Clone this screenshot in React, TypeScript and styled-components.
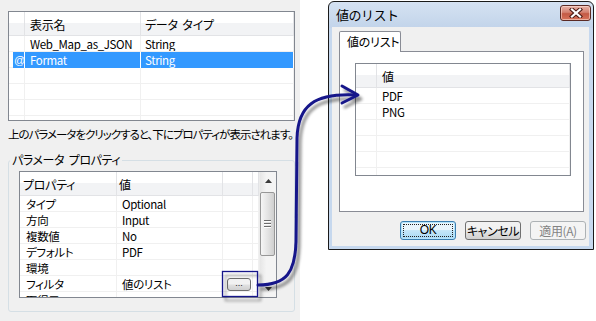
import styled, { createGlobalStyle } from "styled-components";

const GlobalStyle = createGlobalStyle`
  html, body {
    margin: 0;
    padding: 0;
    background: #ffffff;
  }
  body {
    font-family: "Noto Sans CJK JP", "Liberation Sans", sans-serif;
    font-size: 12px;
    font-feature-settings: "palt";
    color: #000;
  }
  * {
    box-sizing: border-box;
  }
`;

const topCols = "16px 116px 1fr";
const propCols = "97px 106px 30px 1fr";
const listCols = "21px 1fr";

const paramRows = [
  { name: "Web_Map_as_JSON", type: "String", mark: "", selected: false },
  { name: "Format", type: "String", mark: "@", selected: true },
  { name: "", type: "", mark: "", selected: false },
  { name: "", type: "", mark: "", selected: false },
  { name: "", type: "", mark: "", selected: false },
  { name: "", type: "", mark: "", selected: false },
];

const propRows = [
  { key: "タイプ", value: "Optional" },
  { key: "方向", value: "Input" },
  { key: "複数値", value: "No" },
  { key: "デフォルト", value: "PDF" },
  { key: "環境", value: "" },
  { key: "フィルタ", value: "値のリスト", button: true },
  { key: "取得元", value: "" },
];

const listValues = ["PDF", "PNG", "", "", "", ""];

export default function App() {
  return (
    <>
      <GlobalStyle />
      <Screen>
        <LeftPanel>
          <ListView $w={287} $h={110}>
            <HeaderRow $cols={topCols}>
              <HeaderCell $pad={0} />
              <HeaderCell $pad={5}>表示名</HeaderCell>
              <HeaderCell $pad={4}>データ&nbsp;&nbsp;タイプ</HeaderCell>
            </HeaderRow>
            {paramRows.map((r, i) => (
              <Row key={i} $cols={topCols}>
                <MarkCell $selected={r.selected}>{r.mark}</MarkCell>
                <Cell $pad={5} $selected={r.selected}>
                  {r.name}
                </Cell>
                <Cell $pad={4} $selected={r.selected}>
                  {r.type}
                </Cell>
              </Row>
            ))}
          </ListView>

          <Hint>上のパラメータをクリックすると、下にプロパティが表示されます。</Hint>

          <GroupBox>
            <GroupLabel>パラメータ&nbsp;&nbsp;プロパティ</GroupLabel>
            <PropertyGrid>
              <PropTable>
                <HeaderRow $cols={propCols}>
                  <HeaderCell $pad={3}>プロパティ</HeaderCell>
                  <HeaderCell $pad={2}>値</HeaderCell>
                  <HeaderCell $pad={0} />
                  <HeaderCell $pad={0} />
                </HeaderRow>
                {propRows.map((r, i) => (
                  <Row key={i} $cols={propCols}>
                    <Cell $pad={6}>{r.key}</Cell>
                    <Cell $pad={5}>{r.value}</Cell>
                    <Cell $pad={4}>
                      {r.button && <EllipsisButton>...</EllipsisButton>}
                    </Cell>
                    <Cell $pad={0} />
                  </Row>
                ))}
              </PropTable>
              <ScrollBar>
                <ScrollArrow>
                  <svg width="7" height="4" viewBox="0 0 7 4">
                    <path d="M0 4 L3.5 0 L7 4 Z" fill="#3b3b3b" />
                  </svg>
                </ScrollArrow>
                <ScrollTrack>
                  <Thumb>
                    <Grip />
                    <Grip />
                    <Grip />
                  </Thumb>
                </ScrollTrack>
                <ScrollArrow>
                  <svg width="7" height="4" viewBox="0 0 7 4">
                    <path d="M0 0 L3.5 4 L7 0 Z" fill="#3b3b3b" />
                  </svg>
                </ScrollArrow>
              </ScrollBar>
            </PropertyGrid>
          </GroupBox>
        </LeftPanel>

        <Dialog>
          <TitleBar>
            <Title>値のリスト</Title>
            <CloseButton>
              <svg width="14" height="10" viewBox="0 0 14 10">
                <path
                  d="M3 1.5 L11 8.5 M11 1.5 L3 8.5"
                  stroke="#4a1a14"
                  strokeWidth="4.2"
                  strokeLinecap="square"
                />
                <path
                  d="M3 1.5 L11 8.5 M11 1.5 L3 8.5"
                  stroke="#ffffff"
                  strokeWidth="2.2"
                  strokeLinecap="square"
                />
              </svg>
            </CloseButton>
          </TitleBar>
          <Client>
            <TabStrip>
              <Tab>値のリスト</Tab>
            </TabStrip>
            <TabPanel>
              <ListView $w={216} $h={113}>
                <HeaderRow $cols={listCols}>
                  <HeaderCell $pad={0} />
                  <HeaderCell $pad={5}>値</HeaderCell>
                </HeaderRow>
                {listValues.map((v, i) => (
                  <Row key={i} $cols={listCols}>
                    <Cell $pad={0} />
                    <Cell $pad={5}>{v}</Cell>
                  </Row>
                ))}
              </ListView>
            </TabPanel>
            <ButtonRow>
              <DefaultButton>
                <FocusRect>OK</FocusRect>
              </DefaultButton>
              <Button>キャンセル</Button>
              <Button disabled>適用(A)</Button>
            </ButtonRow>
          </Client>
        </Dialog>

        <Callout width="596" height="321" viewBox="0 0 596 321">
          <defs>
            <filter id="shade" x="-20%" y="-20%" width="140%" height="140%">
              <feGaussianBlur in="SourceAlpha" stdDeviation="1.6" />
              <feOffset dx="3" dy="4" result="blur" />
              <feComponentTransfer>
                <feFuncA type="linear" slope="0.45" />
              </feComponentTransfer>
              <feMerge>
                <feMergeNode />
                <feMergeNode in="SourceGraphic" />
              </feMerge>
            </filter>
          </defs>
          <g filter="url(#shade)" fill="none" stroke="#16168a">
            <rect x="222.5" y="271.5" width="35" height="25" strokeWidth="1.3" />
            <path
              d="M258 285 C 287 285, 295 272, 296 242 L 297 138 C 298 106, 314 93, 356 95"
              strokeWidth="3"
              strokeLinecap="round"
            />
            <path
              d="M342 86 L 358 95 L 342 103"
              strokeWidth="3"
              strokeLinecap="round"
              strokeLinejoin="round"
            />
          </g>
        </Callout>
      </Screen>
    </>
  );
}

const Screen = styled.div`
  position: relative;
  display: flex;
  align-items: flex-start;
  width: 596px;
  height: 321px;
  overflow: hidden;
  background: #ffffff;
`;

const LeftPanel = styled.div`
  display: flex;
  flex-direction: column;
  flex-shrink: 0;
  width: 300px;
  height: 321px;
  padding: 11px 0 0 8px;
  background: #f0f0f0;
`;

const ListView = styled.div<{ $w: number; $h: number }>`
  width: ${(p) => p.$w}px;
  height: ${(p) => p.$h}px;
  border: 1px solid #828790;
  background: #ffffff;
  overflow: hidden;
  flex-shrink: 0;
`;

const HeaderRow = styled.div<{ $cols: string }>`
  display: grid;
  grid-template-columns: ${(p) => p.$cols};
  height: 24px;
  line-height: 25px;
  background: linear-gradient(#ffffff 0 50%, #f2f3f5 50% 100%);
  border-bottom: 1px solid #e2e3e6;
`;

const HeaderCell = styled.div<{ $pad: number }>`
  padding-left: ${(p) => p.$pad}px;
  border-right: 1px solid #e2e3e6;
  white-space: nowrap;
  overflow: hidden;
  letter-spacing: -0.3px;
`;

const Row = styled.div<{ $cols: string }>`
  display: grid;
  grid-template-columns: ${(p) => p.$cols};
  height: 16px;
  line-height: 15px;
  border-bottom: 1px solid #f0f0f0;
`;

const Cell = styled.div<{ $pad: number; $selected?: boolean }>`
  display: flex;
  align-items: center;
  padding: 1px 0 0 ${(p) => p.$pad}px;
  border-right: 1px solid ${(p) => (p.$selected ? "#ffffff" : "#f0f0f0")};
  background: ${(p) => (p.$selected ? "#3399ff" : "transparent")};
  color: ${(p) => (p.$selected ? "#ffffff" : "#000000")};
  font-size: 11.5px;
  letter-spacing: -0.35px;
  white-space: nowrap;
  overflow: hidden;
`;

const MarkCell = styled.div<{ $selected?: boolean }>`
  padding: 1px 0 0 5px;
  border-right: 1px solid ${(p) => (p.$selected ? "#ffffff" : "#f0f0f0")};
  background: ${(p) =>
    p.$selected
      ? "linear-gradient(to right, transparent 4px, #3399ff 4px)"
      : "transparent"};
  color: #ffffff;
  font-family: "Liberation Sans", sans-serif;
  font-size: 11px;
`;

const Hint = styled.p`
  margin: 6px 0 0;
  font-size: 11.5px;
  line-height: 14px;
  letter-spacing: -1px;
  white-space: nowrap;
`;

const GroupBox = styled.fieldset`
  width: 287px;
  margin: 12px 0 0;
  padding: 0 0 13px 10px;
  border: 1px solid #d5dfe5;
  border-radius: 3px;
  min-width: 0;
`;

const GroupLabel = styled.legend`
  margin-left: -9px;
  padding: 0 2px;
  line-height: 14px;
  letter-spacing: -0.4px;
`;

const PropertyGrid = styled.div`
  display: flex;
  width: 258px;
  height: 127px;
  margin-top: 4px;
  border: 1px solid #828790;
  background: #ffffff;
`;

const PropTable = styled.div`
  flex: 1;
  overflow: hidden;
`;

const EllipsisButton = styled.div`
  width: 24px;
  height: 13px;
  border: 1px solid #707070;
  border-radius: 3px;
  background: linear-gradient(#f2f2f2 0 45%, #e0e0e0 55%, #cfcfcf 100%);
  font-family: "Liberation Sans", sans-serif;
  font-size: 9px;
  line-height: 9px;
  letter-spacing: 0;
  text-align: center;
  color: #222;
`;

const ScrollBar = styled.div`
  display: flex;
  flex-direction: column;
  width: 17px;
  background: linear-gradient(to right, #e6e6e6, #f4f4f4 40%, #f4f4f4);
  border-left: 1px solid #ececec;
`;

const ScrollArrow = styled.div`
  display: flex;
  align-items: center;
  justify-content: center;
  height: 17px;
  flex-shrink: 0;
`;

const ScrollTrack = styled.div`
  flex: 1;
  padding-top: 3px;
`;

const Thumb = styled.div`
  display: flex;
  flex-direction: column;
  align-items: center;
  justify-content: center;
  gap: 1px;
  width: 15px;
  height: 64px;
  border: 1px solid #979797;
  border-radius: 2px;
  background: linear-gradient(to right, #f6f6f6, #e4e4e4 50%, #cfcfcf);
`;

const Grip = styled.span`
  width: 7px;
  height: 2px;
  border-top: 1px solid #6d6d6d;
  border-bottom: 1px solid #ffffff;
`;

const Dialog = styled.div`
  display: flex;
  flex-direction: column;
  flex-shrink: 0;
  width: 266px;
  height: 249px;
  margin: 1px 0 0 28px;
  border: 1px solid #1a1a1a;
  border-radius: 6px 6px 0 0;
  background: linear-gradient(#d5e2f2, #c2d4ea 26px, #c6d8ee 26px, #c6d8ee);
`;

const TitleBar = styled.div`
  display: flex;
  align-items: flex-start;
  justify-content: space-between;
  height: 25px;
  padding: 3px 2px 0 7px;
  flex-shrink: 0;
`;

const Title = styled.span`
  font-size: 13px;
  line-height: 20px;
  font-feature-settings: normal;
  letter-spacing: -0.5px;
  white-space: nowrap;
`;

const CloseButton = styled.div`
  display: flex;
  align-items: center;
  justify-content: center;
  width: 31px;
  height: 16px;
  border: 1px solid #5b2a24;
  border-radius: 3px;
  background: linear-gradient(#e8b3a8, #d48271 45%, #c35a45 55%, #d7735a);
  box-shadow: inset 0 0 0 1px rgba(255, 230, 220, 0.55);
`;

const Client = styled.div`
  display: flex;
  flex-direction: column;
  height: 219px;
  margin: 0 4px 0 3px;
  padding: 4px 5px 0 7px;
  background: #f0f0f0;
`;

const TabStrip = styled.div`
  display: flex;
  height: 20px;
  position: relative;
  z-index: 1;
`;

const Tab = styled.div`
  width: 62px;
  height: 21px;
  padding-left: 7px;
  border: 1px solid #898c95;
  border-bottom: none;
  border-radius: 2px 2px 0 0;
  background: #ffffff;
  line-height: 20px;
  letter-spacing: -0.2px;
  white-space: nowrap;
`;

const TabPanel = styled.div`
  width: 245px;
  height: 161px;
  padding: 11px 0 0 15px;
  border: 1px solid #898c95;
  background: #ffffff;
`;

const ButtonRow = styled.div`
  display: flex;
  justify-content: flex-end;
  gap: 9px;
  margin-top: 9px;
  margin-right: -2px;
`;

const Button = styled.button`
  width: 56px;
  height: 19px;
  padding: 0;
  border: 1px solid #707070;
  border-radius: 3px;
  background: linear-gradient(#f2f2f2 0 50%, #e6e6e6 50%, #d0d0d0 100%);
  font-family: inherit;
  font-size: 12px;
  font-feature-settings: "palt";
  letter-spacing: -0.4px;
  line-height: 17px;
  color: #000;
  white-space: nowrap;

  &:disabled {
    border-color: #adb2b5;
    background: #f4f4f4;
    color: #838383;
  }
`;

const DefaultButton = styled(Button)`
  padding: 2px;
  border-color: #3c7fb1;
  background: linear-gradient(#e9f5fc 0 50%, #c6e7f8 50%, #a7d9f5 100%);
  box-shadow: inset 0 0 0 1px #b4e4fb;
`;

const FocusRect = styled.span`
  display: block;
  height: 13px;
  border: 1px dotted #222;
  line-height: 11px;
  font-family: "Liberation Sans", sans-serif;
`;

const Callout = styled.svg`
  position: absolute;
  left: 0;
  top: 0;
  pointer-events: none;
`;
